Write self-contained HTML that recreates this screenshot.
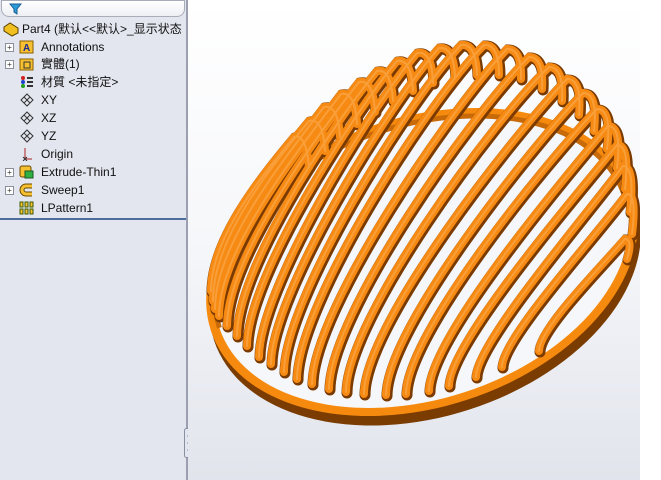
<!DOCTYPE html>
<html><head><meta charset="utf-8"><style>
body{margin:0;width:661px;height:480px;overflow:hidden;background:#fff;font-family:"Liberation Sans","Noto Sans CJK SC",sans-serif;position:relative}
#panel{position:absolute;left:0;top:0;width:186px;height:480px;background:#e3e6ef;border-right:2px solid #9aa0b0}
#filter{position:absolute;left:1px;top:0;width:182px;height:15px;border:1px solid #a8adb8;border-radius:0 0 8px 8px;background:linear-gradient(#fff,#eef0f4)}
.row{position:absolute;left:0;font-size:12px;color:#111;white-space:nowrap;height:16px;line-height:16px}
.t{position:absolute;left:41px}
.ic{position:absolute;left:19px;top:1px;width:15px;height:14px}
.pl{position:absolute;left:5px;top:4px;width:7px;height:7px;border:1px solid #8a8f99;background:#fff;font-size:8px;line-height:7px;text-align:center;color:#333}
#vp{position:absolute;left:188px;top:0;width:452px;height:480px;background:linear-gradient(#fff 0%,#f6f7fa 50%,#e1e4ec 100%)}
#line{position:absolute;left:0;top:218px;width:186px;height:2px;background:#4d6e9c}
</style></head><body>
<div id="panel">
<div id="filter"><svg width="14" height="14" style="position:absolute;left:7px;top:1px"><path d="M1 2h11l-4 5v5l-3-2v-3z" fill="#2a9ad8" stroke="#1a5e90"/></svg></div>
<div class="row" style="top:21px;left:0"><svg width="18" height="16" style="position:absolute;left:2px"><path d="M2 6l6-4 8 5v5l-6 3-8-5z" fill="#f0c020" stroke="#5a4000"/></svg><span style="position:absolute;left:22px">Part4 (默认&lt;&lt;默认&gt;_显示状态</span></div>
<div class="row" style="top:39px"><div class="pl">+</div><svg class="ic"><rect x="1" y="1" width="13" height="12" fill="#f6c030" stroke="#8a6000"/><text x="4" y="11" font-size="10" font-weight="bold" fill="#1a2a90">A</text></svg><span class="t">Annotations</span></div>
<div class="row" style="top:56px"><div class="pl">+</div><svg class="ic"><rect x="1" y="2" width="13" height="11" fill="#f6c030" stroke="#8a6000"/><rect x="5" y="5" width="6" height="6" fill="none" stroke="#333"/></svg><span class="t">實體(1)</span></div>
<div class="row" style="top:74px"><svg class="ic"><circle cx="4" cy="3" r="2" fill="#d02020"/><circle cx="4" cy="7" r="2" fill="#2040d0"/><circle cx="4" cy="11" r="2" fill="#20a020"/><path d="M8 3h6M8 7h6M8 11h6" stroke="#333" stroke-width="2"/></svg><span class="t">材質 &lt;未指定&gt;</span></div>
<div class="row" style="top:92px"><svg class="ic"><path d="M2 7l6-6 6 6-6 6z M5 4l6 6M5 10l6-6" fill="none" stroke="#333"/></svg><span class="t">XY</span></div>
<div class="row" style="top:110px"><svg class="ic"><path d="M2 7l6-6 6 6-6 6z M5 4l6 6M5 10l6-6" fill="none" stroke="#333"/></svg><span class="t">XZ</span></div>
<div class="row" style="top:128px"><svg class="ic"><path d="M2 7l6-6 6 6-6 6z M5 4l6 6M5 10l6-6" fill="none" stroke="#333"/></svg><span class="t">YZ</span></div>
<div class="row" style="top:146px"><svg class="ic"><path d="M6 1v11h7" fill="none" stroke="#b02020"/><path d="M4 10l4 4M8 10l-4 4" stroke="#333"/></svg><span class="t">Origin</span></div>
<div class="row" style="top:164px"><div class="pl">+</div><svg class="ic"><rect x="1" y="1" width="11" height="11" rx="2" fill="#f6c030" stroke="#6a4a00"/><rect x="6" y="6" width="8" height="7" fill="#30b040" stroke="#1a5a20"/></svg><span class="t">Extrude-Thin1</span></div>
<div class="row" style="top:182px"><div class="pl">+</div><svg class="ic"><path d="M13 3h-6a4 4 0 0 0 0 8h6" fill="none" stroke="#6a4a00" stroke-width="5"/><path d="M13 3h-6a4 4 0 0 0 0 8h6" fill="none" stroke="#f6c030" stroke-width="3"/></svg><span class="t">Sweep1</span></div>
<div class="row" style="top:200px"><svg class="ic"><g fill="#f6c030" stroke="#3a5a00"><rect x="1" y="1" width="3" height="5"/><rect x="6" y="1" width="3" height="5"/><rect x="11" y="1" width="3" height="5"/><rect x="1" y="8" width="3" height="5"/><rect x="6" y="8" width="3" height="5"/><rect x="11" y="8" width="3" height="5"/></g></svg><span class="t">LPattern1</span></div>
<div id="line"></div>
<svg width="8" height="30" style="position:absolute;left:184px;top:428px"><rect x="0.5" y="0.5" width="7" height="29" rx="2" fill="#e3e6ef" stroke="#8890a0"/><path d="M6 6l-3 2 3 2zM6 13l-3 2 3 2zM6 20l-3 2 3 2z" fill="#5a60a0"/></svg>
</div>
<div id="vp"></div>
<svg width="661" height="480" style="position:absolute;left:0;top:0">
<defs>
<g id="tubes">
<path d="M212 292C212 240 260 180 295 138q12-4 15 30"/>
<path d="M214 302C214 240 270 170 310 122q14-4 16 30"/>
<path d="M216 310C216 245 285 160 325 108q14-3 16 30"/>
<path d="M220 317C220 250 300 150 342 95q14-3 16 30"/>
<path d="M228 327C228 260 315 140 360 83q14-3 16 30"/>
<path d="M238 337C238 270 330 130 378 72q14-3 16 30"/>
<path d="M248 347C248 280 350 120 398 62q14-3 16 30"/>
<path d="M260 358C260 290 370 110 418 54q15-3 16 30"/>
<path d="M272 365C272 295 390 105 440 49q15-2 16 30"/>
<path d="M285 373C285 300 410 100 462 46q15-2 16 30"/>
<path d="M298 380C298 305 430 100 485 46q15-1 15 30"/>
<path d="M313 385C313 310 455 105 508 50q15 0 14 30"/>
<path d="M330 390C330 315 475 112 530 58q15 0 13 32"/>
<path d="M347 393C347 320 495 120 550 68q15 0 13 34"/>
<path d="M365 395C365 325 515 135 568 80q15 0 12 36"/>
<path d="M387 396C387 330 530 150 584 94q15 0 11 38"/>
<path d="M407 395C407 335 545 165 598 110q15 0 10 40"/>
<path d="M430 392C430 340 560 185 609 127q14 0 9 42"/>
<path d="M450 387C450 345 570 205 618 146q13 0 8 44"/>
<path d="M477 378C477 345 580 225 624 167q12 0 7 46"/>
<path d="M503 368C503 340 590 245 628 195q10 0 5 40"/>
<path d="M540 352C540 330 600 270 626 240q8 0 2 20"/>
</g>
</defs>
<g transform="rotate(-18 422 262)">
<ellipse cx="422" cy="272" rx="222" ry="145" fill="#7a3c00"/>
<ellipse cx="422" cy="262" rx="222" ry="145" fill="#f68a0e"/>
<ellipse cx="422" cy="262" rx="213" ry="137" fill="#f6f7fa"/>
<path d="M209 262a213 137 0 0 1 426 0" fill="none" stroke="#c86a08" stroke-width="5"/>
</g>
<g fill="none" stroke-linecap="round">
<use href="#tubes" stroke="#7a3a00" stroke-width="11"/>
<use href="#tubes" stroke="#f68a12" stroke-width="8" transform="translate(-1 -1)"/>
<use href="#tubes" stroke="#fbad55" stroke-width="2" opacity="0.6" transform="translate(-1 -1)"/>
</g>
<rect x="640" y="0" width="21" height="480" fill="#fff"/>
</svg>
</body></html>
